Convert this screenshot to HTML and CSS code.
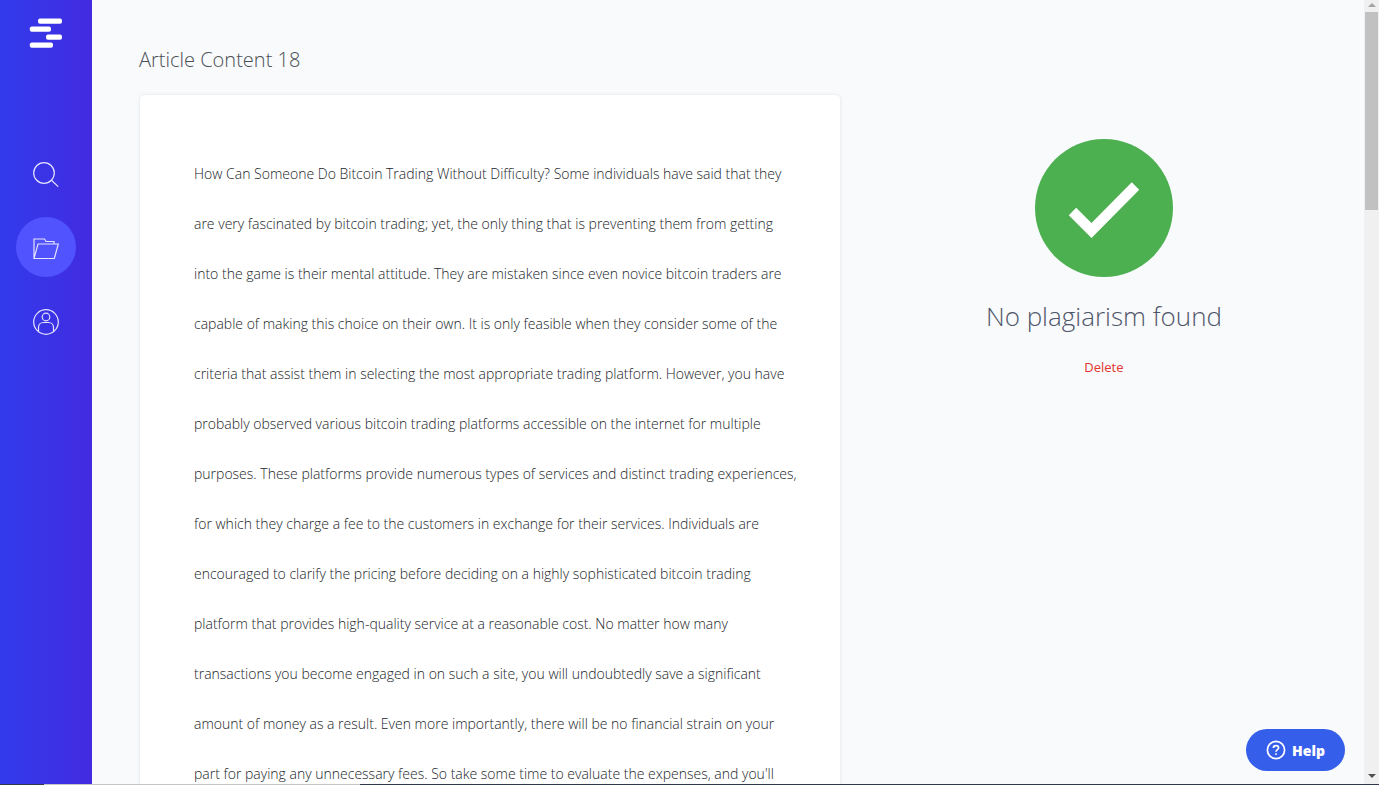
FILE: index.html
```
<!DOCTYPE html>
<html lang="en">

<head>
    <meta charset="UTF-8">
    <meta name="viewport" content="width=device-width, initial-scale=1.0">
    <title>Article Content 18</title>
    <link rel="stylesheet" href="styles.css">
</head>

<body>
    <div class="page">
        <!-- sidebar -->
        <nav class="sidebar">
            <a class="logo" href="#" aria-label="Home">
                <svg width="34" height="30" viewBox="0 0 34 30" fill="#fff">
                    <rect x="9" y=".4" width="24" height="5.3" rx="2" />
                    <rect x=".8" y="8.4" width="21.2" height="5.3" rx="2" />
                    <rect x="17" y="16.4" width="16" height="5.3" rx="2" />
                    <rect x=".8" y="24.4" width="23.2" height="5.3" rx="2" />
                </svg>
            </a>
            <a class="nav_item" href="#" aria-label="Search">
                <svg width="28" height="28" viewBox="0 0 28 28">
                    <circle cx="12" cy="14" r="10.3" />
                    <path d="M19.2 21L26.2 27.6" />
                </svg>
            </a>
            <a class="nav_item active" href="#" aria-label="Articles">
                <svg width="28" height="28" viewBox="0 0 28 28">
                    <path d="M2 25.5V6H12.5L14 8.5H22V11M2 25.5L6 11H26.3L22.3 25.5Z" />
                </svg>
            </a>
            <a class="nav_item" href="#" aria-label="Account">
                <svg width="28" height="28" viewBox="0 0 28 28">
                    <circle cx="14" cy="15" r="12.3" />
                    <circle cx="14" cy="10" r="3.8" />
                    <path d="M6.5 24.8V20.5C6.5 17.6 8.6 15.5 11.5 15.5H16.5C19.4 15.5 21.5 17.6 21.5 20.5V24.8" />
                </svg>
            </a>
        </nav>

        <!-- content -->
        <main class="content">
            <h1 class="title">Article Content 18</h1>
            <div class="columns">
                <article class="card">
                    <p>
                        How Can Someone Do Bitcoin Trading Without Difficulty? Some individuals have said that they<br>
                        are very fascinated by bitcoin trading; yet, the only thing that is preventing them from getting<br>
                        into the game is their mental attitude. They are mistaken since even novice bitcoin traders are<br>
                        capable of making this choice on their own. It is only feasible when they consider some of the<br>
                        criteria that assist them in selecting the most appropriate trading platform. However, you have<br>
                        probably observed various bitcoin trading platforms accessible on the internet for multiple<br>
                        purposes. These platforms provide numerous types of services and distinct trading experiences,<br>
                        for which they charge a fee to the customers in exchange for their services. Individuals are<br>
                        encouraged to clarify the pricing before deciding on a highly sophisticated bitcoin trading<br>
                        platform that provides high-quality service at a reasonable cost. No matter how many<br>
                        transactions you become engaged in on such a site, you will undoubtedly save a significant<br>
                        amount of money as a result. Even more importantly, there will be no financial strain on your<br>
                        part for paying any unnecessary fees. So take some time to evaluate the expenses, and you'll
                    </p>
                </article>
                <section class="result">
                    <svg class="check" width="138" height="138" viewBox="0 0 138 138">
                        <circle cx="69" cy="69" r="69" fill="#4caf50" />
                        <path d="M37.5 72.5L56.5 91.5L100.5 47" fill="none" stroke="#fff" stroke-width="10.5" />
                    </svg>
                    <h2>No plagiarism found</h2>
                    <button class="delete" type="button">Delete</button>
                </section>
            </div>
        </main>

        <!-- scrollbar -->
        <div class="scrollbar">
            <svg width="15" height="12" viewBox="0 0 15 12"><path d="M4 7L8 3L12 7Z" fill="#a3a3a3" /></svg>
            <div class="thumb"></div>
            <svg class="down" width="15" height="15" viewBox="0 0 15 15"><path d="M4 5L8 9L12 5Z" fill="#505050" /></svg>
        </div>

        <button class="help" type="button">
            <svg width="20" height="20" viewBox="0 0 20 20" fill="none" stroke="#fff">
                <circle cx="10" cy="10" r="8.6" stroke-width="1.7" />
                <path d="M7.4 8C7.4 6.5 8.5 5.6 10 5.6C11.5 5.6 12.6 6.5 12.6 7.8C12.6 9.6 10 9.7 10 11.8" stroke-width="1.7" />
                <circle cx="10" cy="14.1" r=".6" stroke-width="1" />
            </svg>
            Help
        </button>
    </div>
    <div class="taskbar">
        <div class="preview"></div>
    </div>
</body>

</html>
```
FILE: styles.css
```
* {
    box-sizing: border-box;
}

body {
    margin: 0;
    height: 100vh;
    display: flex;
    flex-direction: column;
    overflow: hidden;
    background: #f8fafc;
    font-family: "Segoe UI", "Open Sans", sans-serif;
    font-weight: 300;
    color: #212529;
}

.page {
    flex: 1;
    min-height: 0;
    display: flex;
    overflow: hidden;
}

/* sidebar */
.sidebar {
    width: 92px;
    flex-shrink: 0;
    padding-top: 18px;
    display: flex;
    flex-direction: column;
    align-items: center;
    gap: 14px;
    background: linear-gradient(to right, #313bec, #432be0);
}

.logo {
    height: 111px;
}

.logo svg {
    display: block;
}

.nav_item {
    width: 60px;
    height: 60px;
    border-radius: 50%;
    display: flex;
    align-items: center;
    justify-content: center;
}

.nav_item svg {
    fill: none;
    stroke: #e4e2ff;
    stroke-width: 1.2;
}

.nav_item.active {
    background: #5153ff;
}

/* content */
.content {
    flex: 1;
    min-width: 0;
    padding: 44px 47px 0;
}

.title {
    margin: 0 0 18px;
    font-size: 20px;
    line-height: 32px;
    font-weight: 300;
    color: #4b4f54;
}

.columns {
    display: grid;
    grid-template-columns: 28fr 17fr;
    column-gap: 50px;
}

.card {
    min-width: 0;
    padding: 54px;
    background: #fff;
    border: 1px solid #edf1f4;
    border-radius: 5px;
    box-shadow: 0 0 4px rgba(0, 0, 0, 0.04);
}

.card p {
    margin: 0;
    font-size: 14px;
    line-height: 50px;
    white-space: nowrap;
}

.result {
    display: flex;
    flex-direction: column;
    align-items: center;
    padding-top: 45px;
}

.result h2 {
    margin: 19px 0 23px;
    font-size: 26px;
    line-height: 40px;
    font-weight: 300;
    color: #50566a;
}

.delete {
    padding: 0;
    border: 0;
    background: none;
    font-family: inherit;
    font-size: 13px;
    line-height: 16px;
    color: #e3342f;
    cursor: pointer;
}

/* help button over the page */
.help {
    position: fixed;
    right: 34px;
    bottom: 14px;
    height: 42px;
    padding: 0 20px;
    display: flex;
    align-items: center;
    gap: 6px;
    border: 0;
    border-radius: 21px;
    background: #355eea;
    color: #fff;
    font-family: "Open Sans", sans-serif;
    font-size: 14px;
    font-weight: 800;
    cursor: pointer;
}

/* scrollbar */
.scrollbar {
    width: 15px;
    flex-shrink: 0;
    display: flex;
    flex-direction: column;
    align-items: center;
    background: #f0f0f0;
}

.scrollbar svg {
    flex-shrink: 0;
}

.thumb {
    width: 13px;
    height: 198px;
    background: #c1c1c1;
}

.down {
    margin-top: auto;
}

.taskbar {
    height: 1px;
    padding-left: 44px;
    background: #2f3b4b;
}

.preview {
    width: 316px;
    height: 1px;
    background: #c4c4c4;
}
```
